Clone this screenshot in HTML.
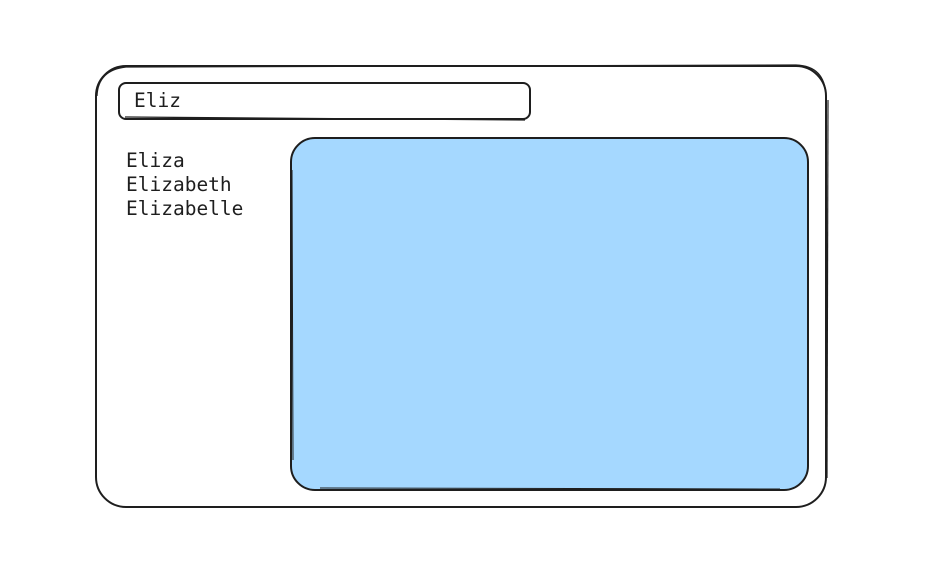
<!DOCTYPE html>
<html><head><style>
html,body{margin:0;padding:0;background:#fff;width:930px;height:588px;overflow:hidden}
svg{display:block}
text{font-family:"DejaVu Sans Mono","Liberation Mono",monospace;font-size:19.5px;fill:#1e1e1e}
</style></head><body>
<svg width="930" height="588" viewBox="0 0 930 588">
<rect x="96" y="66" width="730" height="441" rx="30" fill="#fff" stroke="#1e1e1e" stroke-width="2"/>
<path d="M97 96 Q98 70 126 67 L796 65 Q825 66 826 96" fill="none" stroke="#1e1e1e" stroke-width="1.2"/>
<path d="M828 100 L827 478" fill="none" stroke="#1e1e1e" stroke-width="1.2"/>
<rect x="119" y="83" width="411" height="36" rx="7" fill="#fff" stroke="#1e1e1e" stroke-width="2"/>
<path d="M125 117 L525 120" fill="none" stroke="#1e1e1e" stroke-width="1.2"/>
<text x="134" y="107">Eliz</text>
<rect x="291" y="138" width="517" height="352" rx="24" fill="#a5d8ff" stroke="#1e1e1e" stroke-width="2"/>
<path d="M292 170 L293 460 M320 488 L780 489" fill="none" stroke="#1e1e1e" stroke-width="1"/>
<text x="126" y="167">Eliza</text>
<text x="126" y="191">Elizabeth</text>
<text x="126" y="215">Elizabelle</text>
</svg>
</body></html>
